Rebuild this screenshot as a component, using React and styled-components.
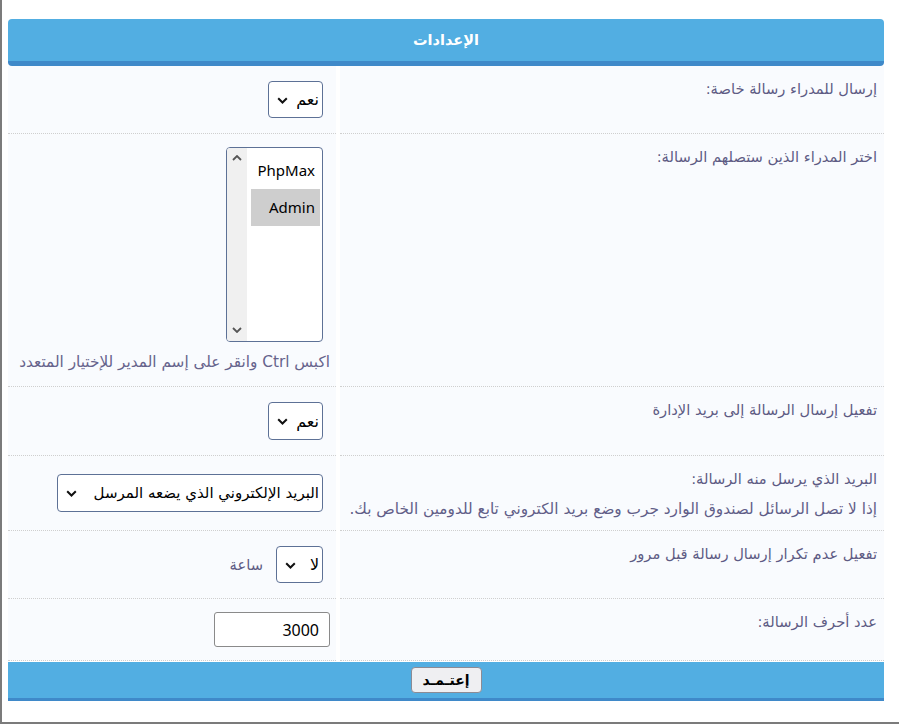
import React from "react";
import styled, { createGlobalStyle } from "styled-components";

const GlobalStyle = createGlobalStyle`
  html, body { margin: 0; padding: 0; background: #fff; }
  body { font-family: "DejaVu Sans", sans-serif; }
`;

const Frame = styled.div`
  box-sizing: border-box;
  height: 724px;
  border-left: 2px solid #7b7b7b;
  border-bottom: 2px solid #7b7b7b;
  padding: 19px 15px 0 6px;
`;

const Panel = styled.form`
  direction: rtl;
  display: flex;
  flex-direction: column;
  margin: 0;
`;

const Header = styled.div`
  height: 42px;
  background: #52aee2;
  border-bottom: 5px solid #3f89c9;
  border-radius: 4px;
  display: flex;
  align-items: center;
  justify-content: center;
  color: #fff;
  font-weight: bold;
  font-size: 14.5px;
`;

const Row = styled.div`
  display: grid;
  grid-template-columns: 544px 328px;
  column-gap: 4px;
`;

const LabelCell = styled.div`
  background: #f9fbfe;
  border-bottom: 1px dotted #cfcfcf;
  padding: 12px 7px 10px;
  color: #5e5b84;
  font-size: 14.7px;
  line-height: 22px;
`;

const Hint = styled.div`
  margin-top: 8px;
  font-size: 15.3px;
  color: #615e88;
`;

const ValueCell = styled.div`
  background: #f9fbfe;
  border-bottom: 1px dotted #cfcfcf;
  padding: 13px 6px;
  display: flex;
  flex-direction: column;
  justify-content: center;
  align-items: flex-start;
`;

const Inline = styled.div`
  display: flex;
  align-items: center;
  gap: 13px;
`;

const Unit = styled.span`
  color: #5e5b84;
  font-size: 14.7px;
`;

const SelectBox = styled.div`
  position: relative;
  width: ${(p) => p.$w}px;
  margin: 2px 7px 2px 0;
`;

const Select = styled.select`
  appearance: none;
  -webkit-appearance: none;
  box-sizing: border-box;
  width: 100%;
  height: ${(p) => p.$h}px;
  border: 1px solid #5d7196;
  border-radius: 4px;
  background: #fff;
  color: #000;
  font-family: "DejaVu Sans", sans-serif;
  font-size: ${(p) => p.$fs}px;
  padding: 0 3px 0 24px;
  direction: rtl;
  outline: none;
`;

const Chevron = styled.svg`
  position: absolute;
  left: 9px;
  top: 50%;
  margin-top: -3px;
  pointer-events: none;
`;

const ListBox = styled.div`
  box-sizing: border-box;
  width: 97px;
  height: 195px;
  margin-right: 7px;
  border: 1px solid #5d7196;
  border-radius: 4px;
  background: #fff;
  display: flex;
  overflow: hidden;
`;

const Options = styled.div`
  flex: 1;
  padding: 4px 2px 4px 4px;
  display: flex;
  flex-direction: column;
`;

const Option = styled.div`
  height: 37px;
  line-height: 37px;
  padding-right: 5px;
  font-family: "Noto Sans", "DejaVu Sans", sans-serif;
  font-size: 15px;
  color: #000;
  background: ${(p) => (p.$selected ? "#cecece" : "transparent")};
  direction: ltr;
  text-align: right;
`;

const Scrollbar = styled.div`
  width: 20px;
  background: #f0f0f0;
  display: flex;
  flex-direction: column;
  justify-content: space-between;
  align-items: center;
  padding: 7px 0 8px;
`;

const HelpText = styled.div`
  margin-top: 9px;
  font-size: 15.3px;
  line-height: 22px;
  color: #66638c;
`;

const TextInput = styled.input`
  box-sizing: border-box;
  width: 116px;
  height: 35px;
  border: 1px solid #8a8a8a;
  border-radius: 3px;
  background: #fff;
  font-family: "Noto Sans", "DejaVu Sans", sans-serif;
  font-size: 16px;
  color: #000;
  padding: 0 10px;
  text-align: right;
  outline: none;
`;

const Footer = styled.div`
  margin-top: 1px;
  height: 36px;
  background: #52aee2;
  border-bottom: 3px solid #3f89c9;
  display: flex;
  align-items: center;
  justify-content: center;
`;

const Button = styled.button`
  box-sizing: border-box;
  width: 71px;
  height: 26px;
  background: #efeff2;
  border: 1px solid #8b8b95;
  border-radius: 4px;
  font-family: "DejaVu Sans", sans-serif;
  font-weight: bold;
  font-size: 14px;
  color: #000;
  padding: 0;
`;

const ChevronDown = () => (
  <Chevron width="11" height="7" viewBox="0 0 11 7">
    <path d="M1.2 1.2 L5.5 5.5 L9.8 1.2" fill="none" stroke="#111" strokeWidth="2" />
  </Chevron>
);

const Dropdown = ({ w, h = 37, fs = 16, value }) => (
  <SelectBox $w={w}>
    <Select defaultValue={value} $h={h} $fs={fs}>
      <option value={value}>{value}</option>
    </Select>
    <ChevronDown />
  </SelectBox>
);

export default function App() {
  return (
    <>
      <GlobalStyle />
      <Frame>
        <Panel onSubmit={(e) => e.preventDefault()}>
          <Header>الإعدادات</Header>

          <Row>
            <LabelCell>إرسال للمدراء رسالة خاصة:</LabelCell>
            <ValueCell>
              <Dropdown w={55} value="نعم" />
            </ValueCell>
          </Row>

          <Row>
            <LabelCell>اختر المدراء الذين ستصلهم الرسالة:</LabelCell>
            <ValueCell>
              <ListBox>
                <Options>
                  <Option>PhpMax</Option>
                  <Option $selected>Admin</Option>
                </Options>
                <Scrollbar>
                  <svg width="10" height="6" viewBox="0 0 10 6">
                    <path d="M1 5 L5 1 L9 5" fill="none" stroke="#555" strokeWidth="1.8" />
                  </svg>
                  <svg width="10" height="6" viewBox="0 0 10 6">
                    <path d="M1 1 L5 5 L9 1" fill="none" stroke="#555" strokeWidth="1.8" />
                  </svg>
                </Scrollbar>
              </ListBox>
              <HelpText>اكبس Ctrl وانقر على إسم المدير للإختيار المتعدد</HelpText>
            </ValueCell>
          </Row>

          <Row>
            <LabelCell>تفعيل إرسال الرسالة إلى بريد الإدارة</LabelCell>
            <ValueCell>
              <Dropdown w={55} h={38} value="نعم" />
            </ValueCell>
          </Row>

          <Row>
            <LabelCell>
              البريد الذي يرسل منه الرسالة:
              <Hint>إذا لا تصل الرسائل لصندوق الوارد جرب وضع بريد الكتروني تابع للدومين الخاص بك.</Hint>
            </LabelCell>
            <ValueCell>
              <Dropdown w={266} h={38} fs={15} value="البريد الإلكتروني الذي يضعه المرسل" />
            </ValueCell>
          </Row>

          <Row>
            <LabelCell>تفعيل عدم تكرار إرسال رسالة قبل مرور</LabelCell>
            <ValueCell>
              <Inline>
                <Dropdown w={47} value="لا" />
                <Unit>ساعة</Unit>
              </Inline>
            </ValueCell>
          </Row>

          <Row>
            <LabelCell>عدد أحرف الرسالة:</LabelCell>
            <ValueCell>
              <TextInput defaultValue="3000" />
            </ValueCell>
          </Row>

          <Footer>
            <Button type="submit">إعتـمـد</Button>
          </Footer>
        </Panel>
      </Frame>
    </>
  );
}
